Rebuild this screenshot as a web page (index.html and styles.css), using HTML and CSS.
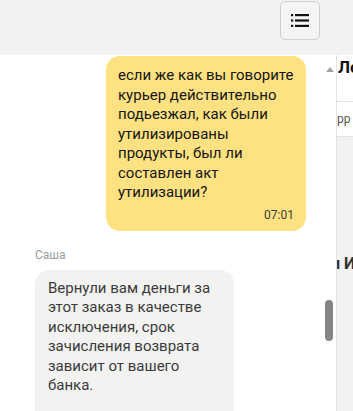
FILE: index.html
```html
<!DOCTYPE html>
<html lang="ru">
<head>
<meta charset="utf-8">
<link rel="stylesheet" href="styles.css">
</head>
<body>
<header class="topbar">
  <button class="menu-btn" aria-label="Меню">
    <svg width="18" height="13" viewBox="0 0 18 13">
      <rect x="0" y="0" width="2.2" height="2.2" fill="#111"/>
      <rect x="0" y="5.4" width="2.2" height="2.2" fill="#111"/>
      <rect x="0" y="10.8" width="2.2" height="2.2" fill="#111"/>
      <rect x="4" y="0" width="14" height="2.2" fill="#111"/>
      <rect x="4" y="5.4" width="14" height="2.2" fill="#111"/>
      <rect x="4" y="10.8" width="14" height="2.2" fill="#111"/>
    </svg>
  </button>
</header>
<div class="main">
  <section class="chat">
    <div class="msg msg-out">
      <div class="bubble bubble-out">
        <p class="text">если же как вы говорите курьер действительно подьезжал, как были утилизированы продукты, был ли составлен акт утилизации?</p>
        <div class="time">07:01</div>
      </div>
    </div>
    <div class="msg msg-in">
      <div class="author">Саша</div>
      <div class="bubble bubble-in">
        <p class="text">Вернули вам деньги за этот заказ в качестве исключения, срок зачисления возврата зависит от вашего банка.</p>
      </div>
    </div>
    <div class="scroll-arrow"></div>
    <div class="scroll-thumb"></div>
  </section>
  <aside class="side">
    <div class="side-title">Ло</div>
    <div class="side-row">рр</div>
    <div class="side-rest">
      <div class="side-title2">и И</div>
    </div>
  </aside>
</div>
</body>
</html>
```
FILE: styles.css
```css
html, body {
  margin: 0;
  padding: 0;
  width: 353px;
  height: 411px;
  overflow: hidden;
  background: #fff;
  font-family: Roboto, "Noto Sans", sans-serif;
}
.topbar {
  height: 55px;
  background: #f2f2f0;
  display: flex;
  justify-content: flex-end;
  align-items: flex-start;
  padding-right: 33px;
  box-sizing: border-box;
}
.menu-btn {
  margin-top: 1px;
  width: 40px;
  height: 39px;
  border: 1px solid #cfcfcd;
  border-radius: 5px;
  background: #f4f4f2;
  display: flex;
  align-items: center;
  justify-content: center;
  padding: 0;
}
.main {
  display: flex;
  height: 356px;
}
.chat {
  position: relative;
  flex: 1;
  overflow: hidden;
  padding-top: 1px;
}
.msg-out {
  display: flex;
  justify-content: flex-end;
  padding-right: 30px;
}
.bubble {
  border-radius: 14px;
  box-sizing: border-box;
}
.bubble-out {
  width: 200px;
  background: #fee282;
  padding: 10px 12px 8px 12px;
}
.text {
  margin: 0;
  font-size: 15px;
  line-height: 19.5px;
  color: #151515;
}
.time {
  text-align: right;
  font-size: 12px;
  line-height: 16px;
  color: #3a3a3a;
  margin-top: 4px;
}
.msg-in {
  padding-left: 35px;
  margin-top: 16px;
}
.author {
  font-size: 12px;
  line-height: 16px;
  color: #9a9a9a;
  margin-bottom: 7px;
}
.bubble-in {
  width: 199px;
  background: #f2f2f0;
  padding: 9px 13px 40px 13px;
}
.bubble-in .text {
  color: #3b3b3b;
}
.scroll-arrow {
  position: absolute;
  left: 326px;
  top: 12px;
  width: 0;
  height: 0;
  border-left: 4px solid transparent;
  border-right: 4px solid transparent;
  border-bottom: 5px solid #a3a3a3;
}
.scroll-thumb {
  position: absolute;
  left: 325px;
  top: 245px;
  width: 8px;
  height: 41px;
  border-radius: 4px;
  background: #858585;
}
.side {
  width: 16px;
  border-left: 1px solid #e4e4e4;
  background: #fafafa;
  overflow: hidden;
  display: flex;
  flex-direction: column;
  white-space: nowrap;
}
.side-title {
  height: 46px;
  font-weight: 700;
  font-size: 17px;
  line-height: 24px;
  padding-left: 1px;
  color: #111;
  border-bottom: 1px solid #e2e2e2;
  background: #fff;
}
.side-row {
  height: 34px;
  font-size: 12px;
  line-height: 34px;
  color: #555;
  border-bottom: 1px solid #e2e2e2;
  background: #fff;
}
.side-rest {
  flex: 1;
  background: #f2f2f2;
  padding-top: 117px;
}
.side-title2 {
  font-weight: 700;
  font-size: 16px;
  line-height: 20px;
  color: #333;
  margin-left: -6px;
}
```
